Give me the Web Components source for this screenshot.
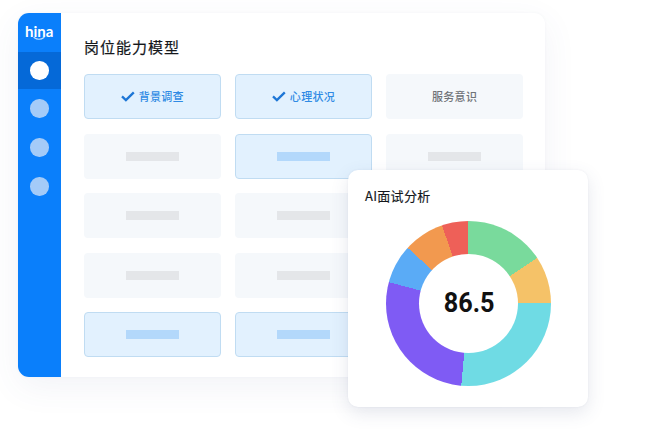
<!DOCTYPE html>
<html lang="zh">
<head>
<meta charset="utf-8">
<style>
    html, body { margin: 0; background: #fff; }
    body { width: 650px; height: 432px; overflow: hidden; font-family: "Noto Sans CJK SC", "Noto Sans", sans-serif; }
</style>
</head>
<body>
<hina-stage>
    <hina-window title="岗位能力模型">
        <hina-card state="on" check>背景调查</hina-card>
        <hina-card state="on" check>心理状况</hina-card>
        <hina-card>服务意识</hina-card>
        <hina-card></hina-card>
        <hina-card state="on"></hina-card>
        <hina-card></hina-card>
        <hina-card></hina-card>
        <hina-card></hina-card>
        <hina-card></hina-card>
        <hina-card></hina-card>
        <hina-card></hina-card>
        <hina-card></hina-card>
        <hina-card state="on"></hina-card>
        <hina-card state="on"></hina-card>
        <hina-card></hina-card>
    </hina-window>
    <hina-score title="AI面试分析" score="86.5"></hina-score>
</hina-stage>

<script>
    customElements.define('hina-stage', class HinaStage extends HTMLElement {
        constructor() {
            super()
            this.attachShadow({mode:'open'}).innerHTML = `
                <style>
                    :host { display: block; position: relative; width: 650px; height: 432px; padding: 13px 0 0 18px; box-sizing: border-box; }
                </style>
                <slot></slot>`
        }
    })

    customElements.define('hina-sidebar', class HinaSidebar extends HTMLElement {
        constructor() {
            super()
            this.attachShadow({mode:'open'}).innerHTML = `
                <style>
                    :host { display: flex; flex-direction: column; width: 42.5px; background: #0a7ffb; flex: none; }
                    .logo { height: 39px; display: flex; align-items: center; justify-content: center; position: relative; color: #fff;
                        font: 700 15px/1 "Lato", "Noto Sans", sans-serif; padding-bottom: 2px; box-sizing: border-box; }
                    .logo svg { position: absolute; left: 10px; top: 23px; }
                    .item { height: 39px; display: flex; align-items: center; justify-content: center; }
                    .item.active { height: 37px; background: #0569d8; }
                    .item i { display: block; width: 18.5px; height: 18.5px; border-radius: 50%; background: #a4cbf8; }
                    .item.active i { background: #fff; }
                </style>
                <div class="logo">hina<svg width="22" height="6" viewBox="0 0 22 6"><path d="M6 1.5q5 3.5 10 0" fill="none" stroke="#bfe0ff" stroke-width="1.2" stroke-linecap="round"/></svg></div>
                <div class="item active"><i></i></div>
                <div class="item"><i></i></div>
                <div class="item"><i></i></div>
                <div class="item"><i></i></div>`
        }
    })

    customElements.define('hina-window', class HinaWindow extends HTMLElement {
        constructor() {
            super()
            this.attachShadow({mode:'open'}).innerHTML = `
                <style>
                    :host { display: flex; width: 527px; height: 364px; border-radius: 11px; background: #fff; overflow: hidden;
                        box-shadow: 0 10px 34px rgba(70,85,140,.07), 0 0 3px rgba(70,85,140,.05); }
                    main { flex: 1; padding: 22px 0 0 23.5px; }
                    h1 { margin: 0 0 16px; height: 23px; font: 400 15px/23px "Noto Sans CJK SC", sans-serif; color: #14171b; letter-spacing: 1px; -webkit-text-stroke: .2px #14171b; }
                    .grid { display: grid; grid-template-columns: repeat(3, 136.5px); grid-auto-rows: 45px; column-gap: 14.7px; row-gap: 14.5px; }
                </style>
                <hina-sidebar></hina-sidebar>
                <main>
                    <h1></h1>
                    <div class="grid"><slot></slot></div>
                </main>`
            this.shadowRoot.querySelector('h1').textContent = this.getAttribute('title')
        }
        connectedCallback() {
            this.removeAttribute('title')
        }
    })

    customElements.define('hina-card', class HinaCard extends HTMLElement {
        constructor() {
            super()
            this.attachShadow({mode:'open'}).innerHTML = `
                <style>
                    :host { display: flex; align-items: center; justify-content: center; gap: 4px; box-sizing: border-box; border-radius: 4px;
                        background: #f5f8fb; color: #6f7378; font: 500 11px/1 "Noto Sans CJK SC", sans-serif; letter-spacing: .3px; }
                    :host([state="on"]) { background: #e2f1fe; border: 1px solid #c0dcf2; color: #2f8ae4; }
                    .bar { width: 53px; height: 9px; background: #e4e6e9; }
                    :host([state="on"]) .bar { background: #b3d8fb; }
                    svg { display: none; flex: none; }
                    :host([check]) svg { display: block; }
                </style>
                <svg width="14" height="11" viewBox="0 0 14 11"><path d="M1 5.4l3.9 3.7L12.8 1.4" fill="none" stroke="#1d76d6" stroke-width="2.3"/></svg>
                <slot></slot>`
        }
        connectedCallback() {
            if (!this.textContent.trim()) {
                const bar = document.createElement('div')
                bar.className = 'bar'
                this.shadowRoot.appendChild(bar)
            }
        }
    })

    customElements.define('hina-score', class HinaScore extends HTMLElement {
        constructor() {
            super()
            this.attachShadow({mode:'open'}).innerHTML = `
                <style>
                    :host { position: absolute; left: 348px; top: 170px; width: 240px; height: 237px; box-sizing: border-box; padding: 16px 0 0 17px;
                        background: #fff; border-radius: 10px; box-shadow: 0 6px 18px rgba(60,75,120,.13), 0 0 2px rgba(60,75,120,.08); }
                    h2 { margin: 0 0 14.5px; font: 400 13px/20px "Noto Sans CJK SC", sans-serif; color: #14171b; letter-spacing: .3px; -webkit-text-stroke: .15px #14171b; }
                    .ring { width: 165px; height: 165px; margin-left: 20.5px; border-radius: 50%; display: flex; align-items: center; justify-content: center;
                        background: conic-gradient(#79da9c 0 56.5deg, #f5c268 0 90deg, #6fdbe4 0 185deg, #7f5bf4 0 285deg, #5aabf6 0 312.5deg, #f2994f 0 341.3deg, #ee6058 0); }
                    .hole { width: 99px; height: 99px; border-radius: 50%; background: #fff; display: flex; align-items: center; justify-content: center; }
                    .hole span { font: 700 28px/1 "Roboto", sans-serif; color: #111; transform: translateX(1px) scaleX(.9); }
                </style>
                <h2></h2>
                <div class="ring"><div class="hole"><span></span></div></div>`
            this.shadowRoot.querySelector('h2').textContent = this.getAttribute('title')
            this.shadowRoot.querySelector('span').textContent = this.getAttribute('score')
        }
    })
</script>
</body>
</html>
